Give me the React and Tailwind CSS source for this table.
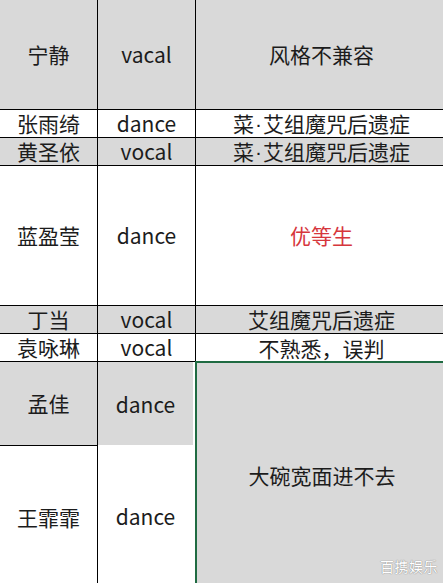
const GRAY = "bg-[#d9d9d9]";

function Cell({ w, h, bg, right = true, bottom = true, red, className = "", children }) {
  return (
    <div
      className={`${w} ${h} ${bg ? GRAY : "bg-white"} ${right ? "border-r border-black" : ""} ${
        bottom ? "border-b border-black" : ""
      } flex items-center justify-center shrink-0 ${red ? "text-[#d6363c]" : "text-[#1c1c1c]"} ${className}`}
    >
      {children}
    </div>
  );
}

function Row({ h, bg, name, type, note, red, lastBorder = true }) {
  return (
    <div className="flex">
      <Cell w="w-[98px]" h={h} bg={bg}>{name}</Cell>
      <Cell w="w-[98px]" h={h} bg={bg}>{type}</Cell>
      <Cell w="flex-1" h={h} bg={bg} right={false} bottom={lastBorder} red={red} className="pl-1">
        {note}
      </Cell>
    </div>
  );
}

// 半角间隔点
const Dot = () => (
  <span className="mx-[1px]" style={{ fontFamily: '"Liberation Sans", sans-serif' }}>·</span>
);

export default function App() {
  return (
    <div
      className="w-[443px] h-[583px] overflow-hidden bg-white text-[21px] leading-none"
      style={{ fontFamily: '"Noto Sans CJK SC", "Noto Sans", sans-serif' }}
    >
      <Row h="h-[110px]" bg name="宁静" type="vacal" note="风格不兼容" />
      <Row h="h-[28px]" name="张雨绮" type="dance" note={<>菜<Dot />艾组魔咒后遗症</>} />
      <Row h="h-[28px]" bg name="黄圣依" type="vocal" note={<>菜<Dot />艾组魔咒后遗症</>} />
      <Row h="h-[140px]" name="蓝盈莹" type="dance" note="优等生" red />
      <Row h="h-[28px]" bg name="丁当" type="vocal" note="艾组魔咒后遗症" />
      <Row h="h-[28px]" name="袁咏琳" type="vocal" note="不熟悉，误判" lastBorder={false} />

      {/* 合并单元格部分 */}
      <div className="flex">
        <div className="w-[98px] flex flex-col border-r border-black shrink-0">
          <Cell w="w-full" h="h-[84px]" bg right={false}>孟佳</Cell>
          <Cell w="w-full" h="h-[142px]" right={false} bottom={false}>王霏霏</Cell>
        </div>
        <div className="w-[97px] flex flex-col shrink-0 pr-[2px] bg-white">
          <Cell w="w-full" h="h-[83px]" bg right={false} bottom={false} className="pt-[1px]">dance</Cell>
          <Cell w="w-full" h="h-[143px]" right={false} bottom={false}>dance</Cell>
        </div>
        <div className="relative flex-1 h-[227px] -mt-px bg-[#d9d9d9] border-l-2 border-t-2 border-[#1f6b42] flex items-center justify-center pl-1 text-[#1c1c1c]">
          大碗宽面进不去
          <span
            className="absolute left-[183px] top-[196px] text-[14px] text-white tracking-[0.5px]"
            style={{ textShadow: "0 0 1px #8a8a8a, 0 0 1px #8a8a8a" }}
          >
            百携娱乐
          </span>
        </div>
      </div>
    </div>
  );
}
